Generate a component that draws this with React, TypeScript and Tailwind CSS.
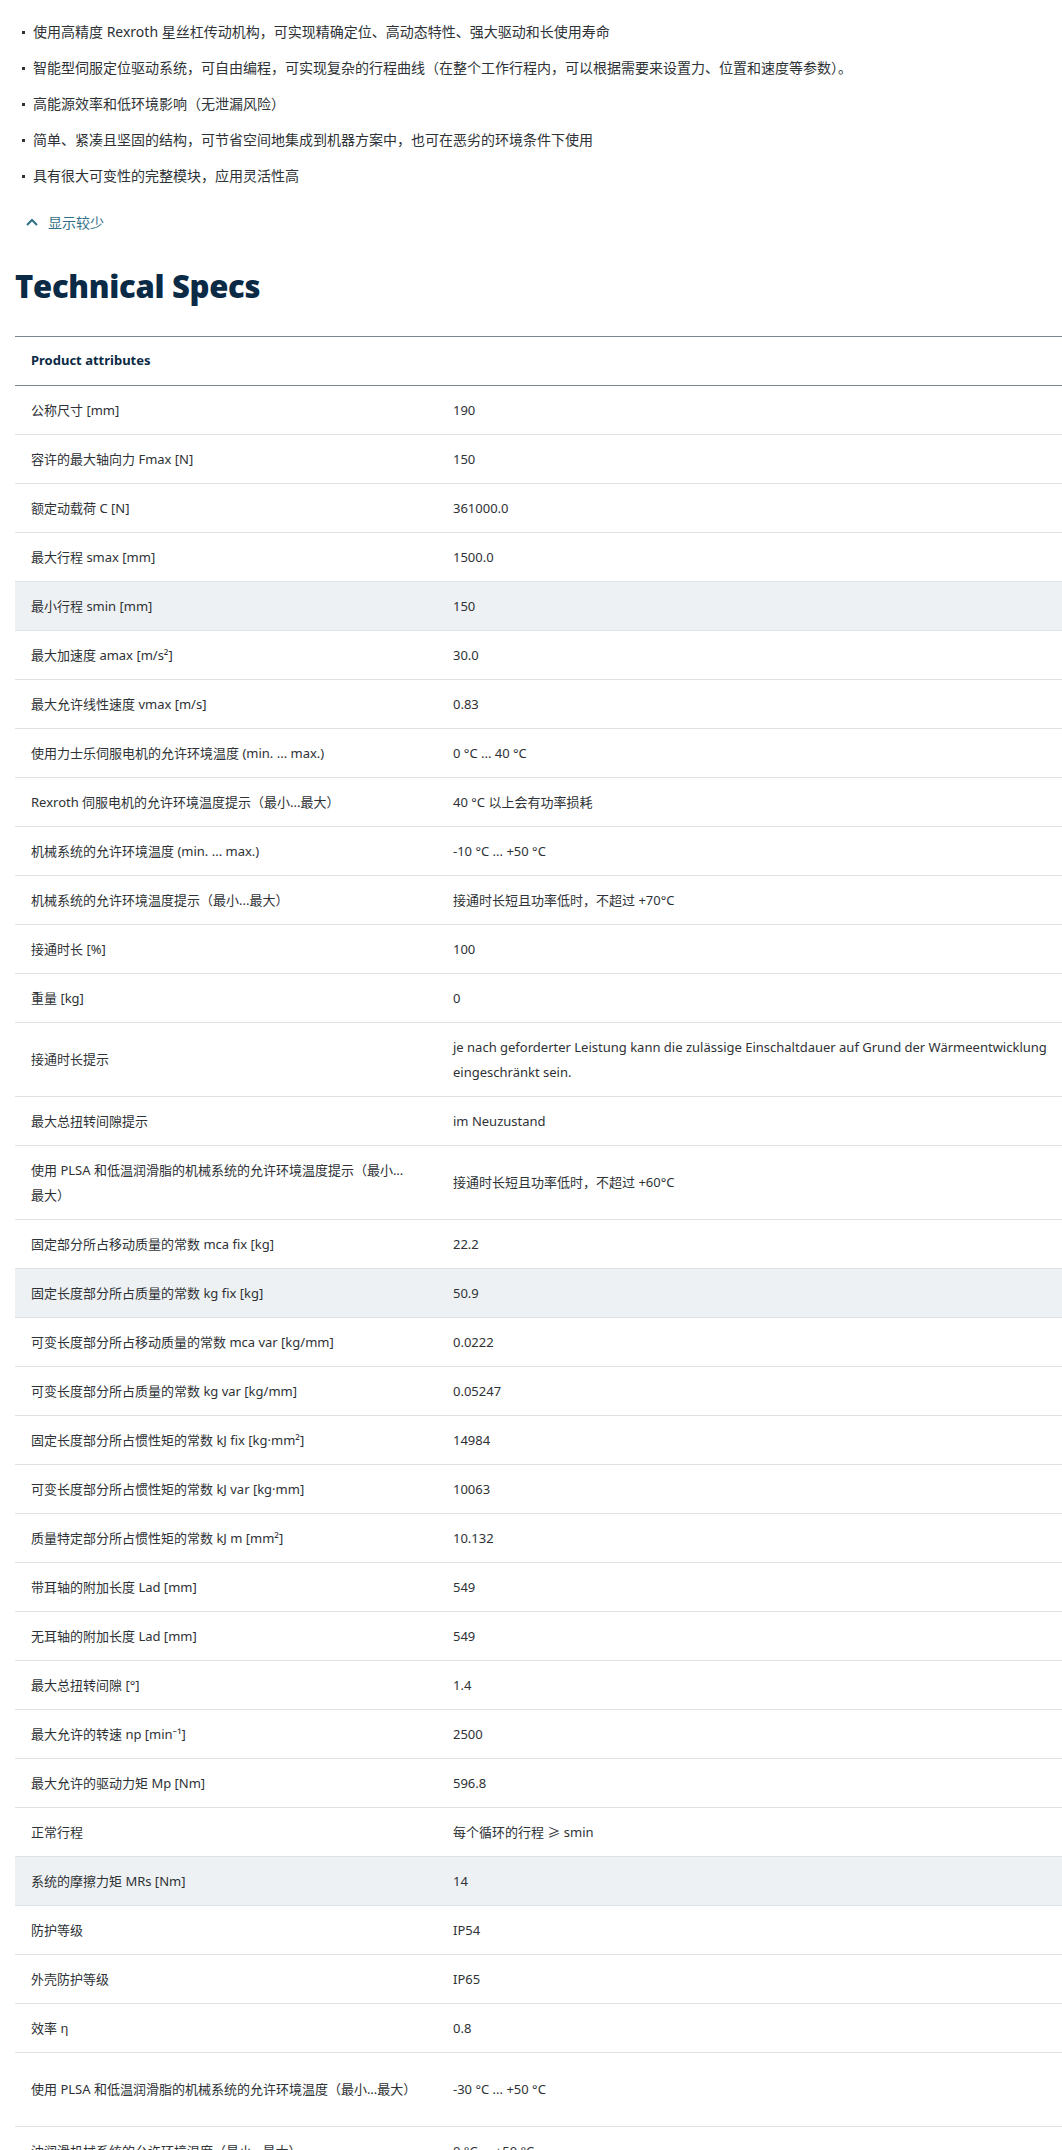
import React from "react";

const bullets = [
  "使用高精度 Rexroth 星丝杠传动机构，可实现精确定位、高动态特性、强大驱动和长使用寿命",
  "智能型伺服定位驱动系统，可自由编程，可实现复杂的行程曲线（在整个工作行程内，可以根据需要来设置力、位置和速度等参数）。",
  "高能源效率和低环境影响（无泄漏风险）",
  "简单、紧凑且坚固的结构，可节省空间地集成到机器方案中，也可在恶劣的环境条件下使用",
  "具有很大可变性的完整模块，应用灵活性高",
];

type Row = [string, string, boolean?];
const rows: Row[] = [
  ["公称尺寸 [mm]", "190"],
  ["容许的最大轴向力 Fmax [N]", "150"],
  ["额定动载荷 C [N]", "361000.0"],
  ["最大行程 smax [mm]", "1500.0"],
  ["最小行程 smin [mm]", "150", true],
  ["最大加速度 amax [m/s²]", "30.0"],
  ["最大允许线性速度 vmax [m/s]", "0.83"],
  ["使用力士乐伺服电机的允许环境温度 (min. ... max.)", "0 °C ... 40 °C"],
  ["Rexroth 伺服电机的允许环境温度提示（最小...最大）", "40 °C 以上会有功率损耗"],
  ["机械系统的允许环境温度 (min. ... max.)", "-10 °C ... +50 °C"],
  ["机械系统的允许环境温度提示（最小...最大）", "接通时长短且功率低时，不超过 +70°C"],
  ["接通时长 [%]", "100"],
  ["重量 [kg]", "0"],
  ["接通时长提示", "je nach geforderter Leistung kann die zulässige Einschaltdauer auf Grund der Wärmeentwicklung eingeschränkt sein."],
  ["最大总扭转间隙提示", "im Neuzustand"],
  ["使用 PLSA 和低温润滑脂的机械系统的允许环境温度提示（最小...最大）", "接通时长短且功率低时，不超过 +60°C"],
  ["固定部分所占移动质量的常数 mca fix [kg]", "22.2"],
  ["固定长度部分所占质量的常数 kg fix [kg]", "50.9", true],
  ["可变长度部分所占移动质量的常数 mca var [kg/mm]", "0.0222"],
  ["可变长度部分所占质量的常数 kg var [kg/mm]", "0.05247"],
  ["固定长度部分所占惯性矩的常数 kJ fix [kg·mm²]", "14984"],
  ["可变长度部分所占惯性矩的常数 kJ var [kg·mm]", "10063"],
  ["质量特定部分所占惯性矩的常数 kJ m [mm²]", "10.132"],
  ["带耳轴的附加长度 Lad [mm]", "549"],
  ["无耳轴的附加长度 Lad [mm]", "549"],
  ["最大总扭转间隙 [°]", "1.4"],
  ["最大允许的转速 np [min⁻¹]", "2500"],
  ["最大允许的驱动力矩 Mp [Nm]", "596.8"],
  ["正常行程", "每个循环的行程 ≥ smin"],
  ["系统的摩擦力矩 MRs [Nm]", "14", true],
  ["防护等级", "IP54"],
  ["外壳防护等级", "IP65"],
  ["效率 η", "0.8"],
  ["使用 PLSA 和低温润滑脂的机械系统的允许环境温度（最小...最大）", "-30 °C ... +50 °C"],
  ["油润滑机械系统的允许环境温度（最小...最大）", "0 °C ... +50 °C"],
];

export default function App() {
  return (
    <div
      className="w-[1062px] h-[2150px] overflow-hidden bg-white text-[#2e3236]"
      style={{ fontFamily: '"Noto Sans", "Noto Sans CJK SC", sans-serif' }}
    >
      <ul className="pt-[14px] pl-[22px] flex flex-col">
        {bullets.map((b) => (
          <li key={b} className="h-[36px] flex items-center text-[14px] leading-[22px]">
            <span className="w-[3px] h-[3px] bg-[#2e3236] mr-[8px] shrink-0" />
            {b}
          </li>
        ))}
      </ul>
      <div className="mt-[16px] ml-[25px] flex items-center gap-[9px] text-[#2f6f88] text-[14px] h-[24px]">
        <svg width="14" height="10" viewBox="0 0 14 10" fill="none" stroke="#2f6f88" strokeWidth="2">
          <path d="M2 8 L7 3 L12 8" />
        </svg>
        <span>显示较少</span>
      </div>
      <h2
        className="mt-[32px] ml-[15px] text-[31px] font-extrabold text-[#0b2a45] leading-[40px] tracking-[-0.3px]"
        style={{ fontFamily: '"Open Sans", sans-serif' }}
      >
        Technical Specs
      </h2>
      <div className="mt-[30px] ml-[15px] w-[1120px] border-t border-[#7d8790]">
        <div className="h-[49px] flex items-center pl-[16px] border-b border-[#7d8790] text-[13px] font-bold text-[#0b2a45]">
          Product attributes
        </div>
        {rows.map(([k, v, grey], i) => {
          const long = k.length > 34 || v.length > 80;
          return (
            <div
              key={i}
              className={`flex items-center border-b border-[#dfe2e5] text-[13px] leading-[25px] ${long ? "h-[74px]" : "h-[49px]"} ${grey ? "bg-[#eef1f3]" : ""}`}
            >
              <div className="w-[438px] pl-[16px] pr-[40px] shrink-0">{k}</div>
              <div className="flex-1 pr-[20px]">{v}</div>
            </div>
          );
        })}
      </div>
    </div>
  );
}
